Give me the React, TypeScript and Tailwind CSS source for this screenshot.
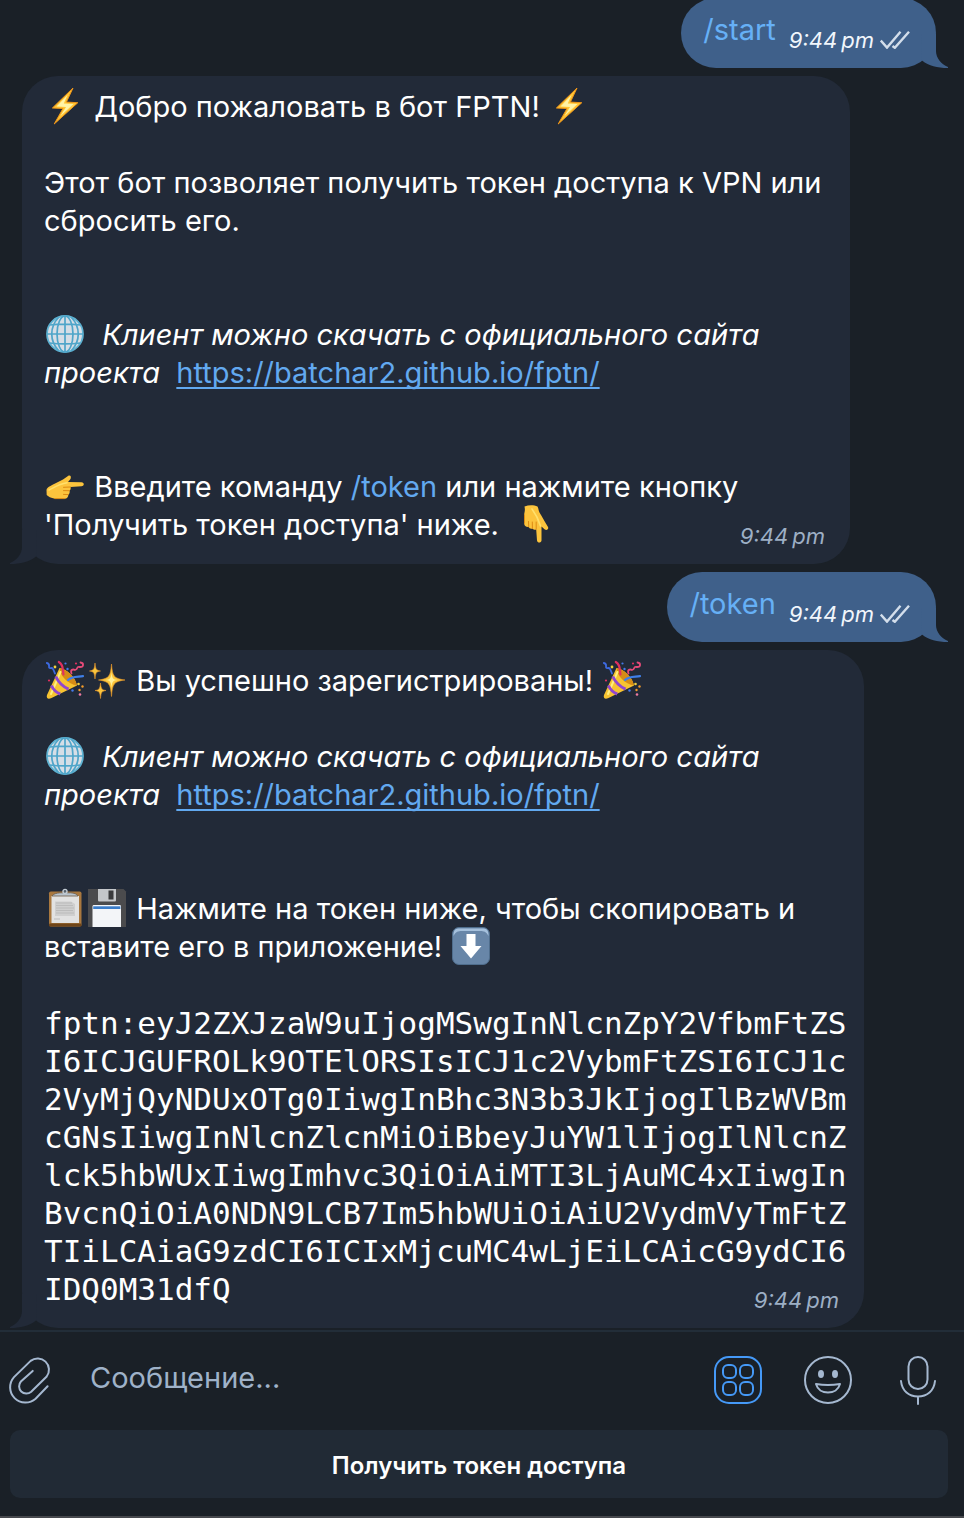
import type { ReactNode } from 'react';

const NBSP = '\u00a0';

function Emoji({ label, children }: { label: string; children: ReactNode }) {
  return (
    <svg role="img" aria-label={label} viewBox="0 0 38 38" className="mx-0.5 -mt-px inline-block size-[38px] overflow-visible align-top">
      {children}
    </svg>
  );
}

function Bolt() {
  return (
    <Emoji label="Молния">
      <path d="M27 1 L6.4 21 L17 21.5 L8.2 37 L31.8 15.7 L20.4 15.1 Z" fill="#ffc534" stroke="#ee9419" strokeWidth="1" strokeLinejoin="round" />
      <path d="M21.5 8 L10.5 19.5 L20 20 L14.5 29 L27.5 17.1 L17.8 16.500 Z" fill="#fff3a6" />
    </Emoji>
  );
}

function Globe() {
  return (
    <Emoji label="Глобус">
      <circle cx="19" cy="19" r="18" fill="#d6dee6" stroke="#5fb3d3" strokeWidth="1.8" />
      <g fill="none" stroke="#4fa5c9" strokeWidth="1.7">
        <ellipse cx="19" cy="19" rx="8" ry="18" />
        <path d="M12.500 2.500 C3.5 12 3.5 26 12.500 35.500 M25.500 2.500 C34.5 12 34.5 26 25.500 35.500" />
        <path d="M19 1 V37 M1 19 H37 M3.5 10 C12 9 26 9 34.5 10 M3.5 28 C12 29 26 29 34.5 28" />
      </g>
    </Emoji>
  );
}

function HandRight() {
  return (
    <Emoji label="Указатель вправо">
      <g transform="translate(0 8)">
        <path d="M0.5 15 C1 12 4 11.5 8 9 L17 4.5 L22 1 C24.5 -0.3 25.5 2 24.5 4 L22 7 L35.5 7.2 C38.5 7.5 38.5 11 35.5 11.3 L24.5 12 C25 14 24.5 15 23.5 15.5 C24 17.5 23.5 19 22.3 19.5 C22.5 22 21 23.7 18.5 23.7 L9 23.7 C5 23 2 21.5 0.7 20 Z" fill="#fcc43d" />
        <path d="M24.5 12 L17.5 12.3 M23.5 15.7 L17.5 15.6 M22.3 19.6 L17.5 19.4 M9 23.6 H18.5" fill="none" stroke="#dc8b13" strokeWidth="1" strokeLinecap="round" />
        <path d="M3 15 C9 12 13 9 21 7.8" fill="none" stroke="#ffe06c" strokeWidth="1.6" strokeLinecap="round" />
      </g>
    </Emoji>
  );
}

function HandDown() {
  return (
    <Emoji label="Указатель вниз">
      <path d="M7.5 1.5 C12 -0.2 17 0 20.5 1.5 C22 4 21 6 24 10 L28 17 L31 22 C32 24.5 29.5 25.8 27.5 24.2 L24.5 21.5 V35.5 C24 38.3 20.5 38.3 20 35.5 L19.2 24.4 C17 25 16 24.6 15.5 23.5 C13.7 24 12.2 23.5 11.8 22 C9 22.3 7.2 20.8 7.2 18.5 V10 C7.2 7 8.5 6 7.5 1.5 Z" fill="#fcc43d" />
      <path d="M19.2 24 V17 M15.4 23.4 L15.3 17 M11.7 21.8 L11.5 16.5 M7.5 18 V10" fill="none" stroke="#dc8b13" strokeWidth="1" strokeLinecap="round" />
      <path d="M15 4 C18 8 21 13 23.5 21" fill="none" stroke="#ffe06c" strokeWidth="1.6" strokeLinecap="round" />
    </Emoji>
  );
}

function Party() {
  return (
    <Emoji label="Хлопушка">
      <path d="M13.5 7 L1 34 C0 37 2 38.5 5 37.2 L31 24.5 C29 16 21 8 13.5 7 Z" fill="#f7c331" />
      <path d="M13.5 7 C14 15 22 23 31 24.5 C29 16 21 8 13.5 7 Z" fill="#d68c16" />
      <path d="M14.5 11 L5 33" stroke="#ffed7e" strokeWidth="2" strokeLinecap="round" />
      <path d="M9.8 15.5 C12 20.5 17 25.5 22.5 28.2 M5.4 24.5 C7 28 10.5 31.5 14.2 33" fill="none" stroke="#9146cf" strokeWidth="3" />
      <path d="M17.5 13.5 C16.5 9 18 4 12.8 1" fill="none" stroke="#e0315f" strokeWidth="2.2" strokeLinecap="round" />
      <path d="M22 19 C26 15 31 16 37 15.2" fill="none" stroke="#3f7fe8" strokeWidth="2.2" strokeLinecap="round" />
      <path d="M25.5 12.5 C24 8.5 27 8 29 9 C33 8 29.5 5 34 6 C38 6 38 2 34.5 1.5" fill="none" stroke="#e74b79" strokeWidth="1.8" strokeLinecap="round" />
      <path d="M0.8 2 C5.5 3 1 7 4.5 7.2 C7 6 8 10 9 12.5" fill="none" stroke="#3d6ae0" strokeWidth="1.8" strokeLinecap="round" />
      <circle cx="9" cy="6" r="1.4" fill="#f4d13c" />
      <circle cx="19.5" cy="2.5" r="1.1" fill="#4479e8" />
      <circle cx="21.5" cy="8" r="1.2" fill="#4479e8" />
      <circle cx="30" cy="2.5" r="1.1" fill="#e0315f" />
      <circle cx="3" cy="19.5" r="1.1" fill="#e0315f" />
      <circle cx="32.5" cy="23" r="1.3" fill="#f4d13c" />
      <circle cx="36.5" cy="25.5" r="1.2" fill="#f39b2a" />
      <circle cx="26.5" cy="29.5" r="1.2" fill="#4479e8" />
      <circle cx="33.5" cy="29" r="1.2" fill="#f39b2a" />
      <circle cx="34" cy="33.5" r="1.3" fill="#ee7ba2" />
    </Emoji>
  );
}

function Sparkles() {
  return (
    <Emoji label="Искры">
      <g fill="#fbc63d" stroke="#e8962a" strokeWidth="0.6">
        <path d="M23.5 3 C24.5 15 25.5 17.5 37 19 C25.5 20.5 24.5 23 23.5 35.5 C22.5 23 21.5 20.5 10.5 19 C21.5 17.5 22.5 15 23.5 3 Z" />
        <path d="M7 2 C7.6 8.5 8.3 9.3 12.5 10 C8.3 10.7 7.6 11.5 7 18 C6.4 11.5 5.7 10.7 1.5 10 C5.7 9.3 6.4 8.5 7 2 Z" />
        <path d="M12.5 22 C13.1 28 13.8 28.8 18 29.5 C13.8 30.2 13.1 31 12.5 37.5 C11.9 31 11.2 30.2 7 29.5 C11.2 28.8 11.9 28 12.5 22 Z" />
      </g>
      <path d="M23.5 11 C24 17.5 25 18.5 29.5 19 C25 19.5 24 20.5 23.5 27 C23 20.5 22 19.5 17.5 19 C22 18.5 23 17.5 23.5 11 Z" fill="#fff19b" />
    </Emoji>
  );
}

function Clipboard() {
  return (
    <Emoji label="Планшет">
      <rect x="3" y="2.5" width="32.5" height="35" rx="1.8" fill="#a9783f" />
      <rect x="3" y="34.5" width="32.5" height="3" rx="1.2" fill="#6f4519" />
      <rect x="5.5" y="7" width="27.5" height="27" fill="#e2e2e2" />
      <path d="M9 12.5 H25 L29 15 V27 H9 Z" fill="#cfcfcf" />
      <path d="M10 14 H26 M10 16.5 H27 M10 19 H28 M10 21.5 H27 M10 24 H28 M8 30 H14" stroke="#bcbcbc" strokeWidth="1.2" />
      <path d="M6 7 C7 4.8 11 4.2 14 3.8 H24.5 C28 4.2 31 4.8 32 7 Z" fill="#b9c4ce" stroke="#6c5a48" strokeWidth="0.8" />
      <circle cx="19" cy="2.4" r="2" fill="#56606b" stroke="#c3ccd4" strokeWidth="1.4" />
    </Emoji>
  );
}

function Floppy() {
  return (
    <Emoji label="Дискета">
      <path d="M0 0 H35.5 L38 2.5 V38 H0 Z" fill="#4b4b4d" />
      <path d="M10 0 H28 V11 C28 12 27.5 12.5 26.5 12.5 H11.5 C10.5 12.5 10 12 10 11 Z" fill="#c4c6c9" />
      <rect x="20.5" y="1.5" width="5" height="9" fill="#3a3a3c" />
      <path d="M4.5 17.5 C4.5 16.5 5 16 6 16 H31.5 C32.5 16 33 16.5 33 17.5 V38 H4.5 Z" fill="#f3f5f8" />
      <rect x="5.2" y="17.3" width="27.2" height="2.7" fill="#3a7cc9" />
    </Emoji>
  );
}

function ArrowDown() {
  return (
    <Emoji label="Стрелка вниз">
      <rect x="0.5" y="0.5" width="37" height="37" rx="6.5" fill="#6886a8" stroke="#4f6d8c" />
      <path d="M1.5 9 C1.5 3 3 1.5 8 1.5 H30 C35 1.5 36.5 3 36.5 9 C34 4.5 32 4 28 4 H10 C6 4 4 4.5 1.5 9 Z" fill="#a5c0dc" />
      <path d="M14.5 7 H23.5 V19 H29.5 L19 31.5 L8.5 19 H14.5 Z" fill="#ffffff" />
    </Emoji>
  );
}

function Tail({ side }: { side: 'left' | 'right' }) {
  return (
    <svg
      aria-hidden="true"
      viewBox="0 0 27 34"
      className={
        side === 'left'
          ? 'absolute bottom-0 -left-3 h-[34px] w-[27px] fill-[#222a38]'
          : 'absolute -right-3 bottom-0 h-[34px] w-[27px] -scale-x-100 fill-[#3f608a]'
      }
    >
      <path d="M12 0 V17 C12 24 7 30 0 33 V34 C11 34 19 32 26 26.5 L27 0 Z" />
    </svg>
  );
}

function Outgoing({ command }: { command: string }) {
  return (
    <div className="relative mr-7 flex h-[70px] items-start self-end rounded-[35px] bg-[#3f608a] pr-[26px] pl-[22px]">
      <a href="#command" className="mt-[13px] text-[#66b0f6]">{command}</a>
      <time className="mt-7 ml-[13px] text-[22px] leading-7 text-[#f1f6fc] italic">9:44{'\u2009'}pm</time>
      <svg aria-label="Прочитано" role="img" viewBox="0 0 30 18" className="mt-[33px] ml-1.5 h-[18px] w-[30px] fill-none stroke-[#d3deeb] stroke-[2.4]">
        <path d="M0.8 9.5 L7 16.6 L20.5 0.8 M12.5 15 L14.8 16.8 L29 0.8" />
      </svg>
      <Tail side="right" />
    </div>
  );
}

function Incoming({ className, children }: { className: string; children: ReactNode }) {
  return (
    <article className={`relative ml-[22px] w-full rounded-[36px] bg-[#222a38] px-[22px] pt-3 pb-5 ${className}`}>
      {children}
      <time className="absolute right-[25px] bottom-3.5 text-[22px] leading-7 text-[#9dafc5] italic">9:44{'\u2009'}pm</time>
      <Tail side="left" />
    </article>
  );
}

function ClientNote() {
  return (
    <p>
      <Globe />
      {NBSP + NBSP}
      <em>Клиент можно скачать с официального сайта</em>
      <br />
      <em>проекта</em>
      {NBSP + NBSP}
      <a href="https://batchar2.github.io/fptn/" className="text-[#62a9f0] underline decoration-2 underline-offset-4 [text-decoration-skip-ink:none]">
        https://batchar2.github.io/fptn/
      </a>
    </p>
  );
}

const TOKEN_LINES = [
  'fptn:eyJ2ZXJzaW9uIjogMSwgInNlcnZpY2VfbmFtZS',
  'I6ICJGUFROLk9OTElORSIsICJ1c2VybmFtZSI6ICJ1c',
  '2VyMjQyNDUxOTg0IiwgInBhc3N3b3JkIjogIlBzWVBm',
  'cGNsIiwgInNlcnZlcnMiOiBbeyJuYW1lIjogIlNlcnZ',
  'lck5hbWUxIiwgImhvc3QiOiAiMTI3LjAuMC4xIiwgIn',
  'BvcnQiOiA0NDN9LCB7Im5hbWUiOiAiU2VydmVyTmFtZ',
  'TIiLCAiaG9zdCI6ICIxMjcuMC4wLjEiLCAicG9ydCI6',
  'IDQ0M31dfQ',
];

export default function App() {
  return (
    <main className="flex min-h-screen flex-col overflow-hidden bg-[#1a2027] font-['Inter',sans-serif] text-white">
      <section className="-mt-0.5 flex flex-col gap-2 pb-0.5 text-[29px] leading-[38px] whitespace-nowrap">
        <Outgoing command="/start" />
        <Incoming className="max-w-[828px]">
          <p><Bolt /> Добро пожаловать в бот FPTN! <Bolt /></p>
          <p className="mt-[38px]">
            Этот бот позволяет получить токен доступа к VPN или
            <br />
            сбросить его.
          </p>
          <div className="mt-[76px]"><ClientNote /></div>
          <p className="mt-[76px]">
            <HandRight /> Введите команду <a href="#command" className="text-[#62a9f0]">/token</a> или нажмите кнопку
            <br />
            'Получить токен доступа' ниже.{NBSP} <HandDown />
          </p>
        </Incoming>
        <Outgoing command="/token" />
        <Incoming className="max-w-[842px]">
          <p><Party /><Sparkles /> Вы успешно зарегистрированы! <Party /></p>
          <div className="mt-[38px]"><ClientNote /></div>
          <p className="mt-[76px]">
            <Clipboard /><Floppy /> Нажмите на токен ниже, чтобы скопировать и
            <br />
            вставите его в приложение! <ArrowDown />
          </p>
          <code className="mt-[38px] flex flex-col items-start font-['DejaVu_Sans_Mono',monospace] text-[31px] leading-[38px]">
            {TOKEN_LINES.map((line) => (
              <span key={line}>{line}</span>
            ))}
          </code>
        </Incoming>
      </section>

      <footer className="flex grow flex-col border-t-2 border-b-2 border-t-[#222d38] border-b-[#47494e]">
        <div className="flex h-24 items-center pr-7 pl-2.5">
          <button type="button" aria-label="Прикрепить файл">
            <svg viewBox="1.3 -0.5 41 48" className="h-12 w-[41px] overflow-visible fill-none stroke-[#a5b8d0] stroke-2" strokeLinecap="round">
              <path d="M38.9 29.7 L26.9 42.2 A15.3 15.3 0 0 1 5.3 20.6 L21.9 4.4 A11.3 11.3 0 0 1 38 20 L22.5 35.3 A7.3 7.3 0 0 1 12.2 25 L24 14.4" />
            </svg>
          </button>
          <input
            type="text"
            aria-label="Сообщение"
            placeholder="Сообщение..."
            className="ml-[39px] min-w-0 grow bg-transparent pb-1 text-[29px] leading-[38px] outline-none placeholder:text-[#9fb2c9]"
          />
          <div className="flex items-center gap-[42px]">
            <button type="button" aria-label="Клавиатура бота">
              <svg viewBox="0 0 48 48" className="size-12 fill-none stroke-[#4599f7] stroke-2">
                <rect x="1" y="1" width="46" height="46" rx="14" />
                <rect x="9" y="9" width="13" height="13" rx="5" />
                <rect x="26" y="9" width="13" height="13" rx="5" />
                <rect x="9" y="26" width="13" height="13" rx="5" />
                <rect x="26" y="26" width="13" height="13" rx="5" />
              </svg>
            </button>
            <button type="button" aria-label="Эмодзи">
              <svg viewBox="0 0 48 48" className="size-12 fill-none stroke-[#a5b8d0] stroke-2">
                <circle cx="24" cy="24" r="23" />
                <ellipse cx="17" cy="18" rx="3" ry="4" fill="#a5b8d0" stroke="none" />
                <ellipse cx="31" cy="18" rx="3" ry="4" fill="#a5b8d0" stroke="none" />
                <path d="M12 28 Q24 30 36 28 C34.5 33.5 29.5 36.6 24 36.6 C18.5 36.6 13.5 33.5 12 28 Z" strokeLinejoin="round" />
              </svg>
            </button>
            <button type="button" aria-label="Голосовое сообщение" className="ml-1.5">
              <svg viewBox="0 0 36 48" className="h-12 w-9 overflow-visible fill-none stroke-[#a5b8d0] stroke-2" strokeLinecap="round">
                <rect x="8.500" y="1" width="19" height="32" rx="9.5" />
                <path d="M1 25 C2 35 9 40.5 18 40.5 C27 40.5 34 35 35 25 M18 40.5 V48" />
              </svg>
            </button>
          </div>
        </div>
        <div className="pt-0.5 pr-4 pb-[18px] pl-2.5">
          <button type="button" className="h-[68px] w-full rounded-[10px] bg-[#212a35] pt-1 text-[24px] leading-8 font-semibold">
            Получить токен доступа
          </button>
        </div>
      </footer>
    </main>
  );
}
